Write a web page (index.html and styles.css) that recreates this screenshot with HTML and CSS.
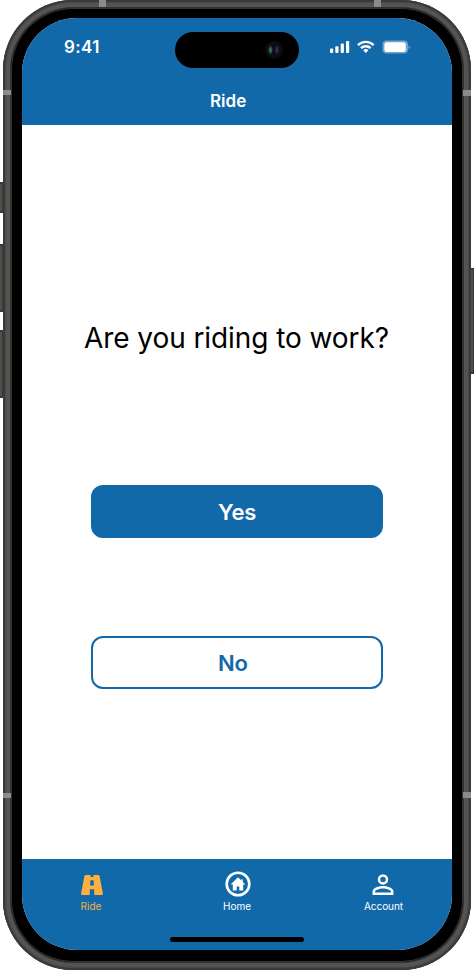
FILE: index.html
```html
<!DOCTYPE html>
<html lang="en">
<head>
<meta charset="utf-8">
<title>Ride</title>
<link rel="stylesheet" href="styles.css">
</head>
<body>
<div class="device">
  <span class="key key-action"></span>
  <span class="key key-up"></span>
  <span class="key key-down"></span>
  <span class="key key-power"></span>
  <div class="frame">
    <div class="bezel">
      <div class="screen">
        <header class="header">
          <div class="status">
            <span class="time">9:41</span>
            <div class="island"><span class="lens"></span></div>
            <svg class="indicators" width="80" height="14" viewBox="0 0 80 14" fill="#fff">
              <rect x="0" y="8.6" width="3.2" height="4.4" rx=".9"/>
              <rect x="5.3" y="6.3" width="3.2" height="6.7" rx=".9"/>
              <rect x="10.7" y="3.6" width="3.2" height="9.4" rx=".9"/>
              <rect x="16" y="1" width="3.2" height="12" rx=".9"/>
              <g fill="none" stroke="#fff" stroke-width="2.4">
                <path d="M28 5.100a11 11 0 0 1 15.600 0"/>
                <path d="M31 8.200a6.800 6.800 0 0 1 9.600 0"/>
              </g>
              <path d="M35.800 13l-2.600-2.700a3.700 3.700 0 0 1 5.200 0z"/>
              <rect x="52.500" y=".6" width="25.500" height="13" rx="4" opacity=".4"/>
              <rect x="54.400" y="2.300" width="21.400" height="9.600" rx="2.500"/>
              <path d="M78.600 5.200q2.800 2 0 4z" opacity=".4"/>
            </svg>
          </div>
          <h1 class="title">Ride</h1>
        </header>
        <main class="content">
          <p class="question">Are you riding to work?</p>
          <button class="choice choice-yes">Yes</button>
          <button class="choice choice-no">No</button>
        </main>
        <nav class="tabs">
          <a class="tab tab-ride">
            <svg class="icon" width="22" height="20" viewBox="0 0 22 20" fill="currentColor"><path fill-rule="evenodd" d="M4.700 0h4.900v2.100h2.800V0h4.900q1 0 1.300 1l3.300 17.400q.2 1.600-1.300 1.600h-7.400v-5.800H8.800V20H1.400Q-.1 20 .1 18.400L3.400 1Q3.700 0 4.700 0zM9.400 5.200l-.3 5.400h3.800l-.3-5.400z"/></svg>
            <span>Ride</span>
          </a>
          <a class="tab tab-home">
            <svg class="icon" width="26" height="26" viewBox="0 0 26 26" fill="currentColor"><circle cx="13" cy="13" r="11.300" fill="none" stroke="currentColor" stroke-width="2.600"/><path d="M13 6.300L5.600 13.500h2.200v5.900h3.900v-4h2.600v4h3.900v-5.900h2.200l-2.600-2.600V8.200h-1.500v1.200z"/></svg>
            <span>Home</span>
          </a>
          <a class="tab tab-account">
            <svg class="icon" width="32" height="32" viewBox="0 0 24 24" fill="currentColor"><path d="M12 4a4 4 0 0 1 4 4 4 4 0 0 1-4 4 4 4 0 0 1-4-4 4 4 0 0 1 4-4m0 1.900A2.100 2.100 0 0 0 9.900 8a2.100 2.100 0 0 0 2.100 2.100A2.100 2.100 0 0 0 14.100 8 2.100 2.100 0 0 0 12 5.900M12 13c2.670 0 8 1.330 8 4v3H4v-3c0-2.670 5.330-4 8-4m0 1.900c-2.970 0-6.100 1.460-6.100 2.100v1.100h12.200V17c0-.64-3.130-2.100-6.100-2.100z"/></svg>
            <span>Account</span>
          </a>
          <span class="home-bar"></span>
        </nav>
      </div>
    </div>
  </div>
  <span class="band band-h band-top-left"></span>
  <span class="band band-h band-top-right"></span>
  <span class="band band-v band-left-top"></span>
  <span class="band band-v band-left-bottom"></span>
  <span class="band band-v band-right-top"></span>
  <span class="band band-v band-right-bottom"></span>
</div>
</body>
</html>
```
FILE: styles.css
```css
* {
  box-sizing: border-box;
}

body {
  margin: 0;
  background: #fff;
  font-family: Inter, "Liberation Sans", sans-serif;
}

.device {
  position: relative;
  width: 474px;
  height: 970px;
  padding: 0 3px;
  overflow: hidden;
}

.frame {
  height: 970px;
  padding: 8px;
  border-radius: 70px;
  background: #555452;
  box-shadow: inset 0 0 0 2px #3b3a38, inset 0 0 1px 3px #4a4947;
}

.bezel {
  height: 954px;
  padding: 10px 11px;
  border-radius: 62px;
  background: #000;
  box-shadow: 0 0 0 1px #32312f, inset 0 0 0 1px #353433;
}

.screen {
  display: flex;
  flex-direction: column;
  height: 932px;
  width: 430px;
  border-radius: 55px;
  background: #fff;
  overflow: hidden;
}

.header {
  height: 107px;
  background: #1269aa;
  color: #fff;
}

.status {
  display: grid;
  grid-template-columns: 153px 124px 153px;
  height: 59px;
  padding-top: 14px;
}

.time {
  padding-left: 42px;
  font-size: 17px;
  font-weight: 600;
  line-height: 31px;
  letter-spacing: 0.4px;
}

.island {
  display: flex;
  align-items: center;
  justify-content: flex-end;
  height: 36px;
  padding-right: 16px;
  border-radius: 18px;
  background: #000;
}

.lens {
  width: 18px;
  height: 18px;
  border-radius: 50%;
  background:
    radial-gradient(ellipse 2.5px 5px at 5.5px 9px, #4a9080, transparent),
    radial-gradient(ellipse 2.5px 5px at 12px 9px, #303c80, transparent),
    #0d0d0f;
}

.indicators {
  margin: 8px 0 0 31px;
}

.title {
  margin: 14px 0 0 188px;
  font-size: 17px;
  font-weight: 600;
  line-height: 20px;
}

.content {
  flex: 1;
  display: flex;
  flex-direction: column;
  align-items: center;
}

.question {
  margin: 195px 0 0;
  padding-right: 1px;
  font-size: 28px;
  line-height: 36px;
  letter-spacing: -0.08px;
  color: #000;
  white-space: nowrap;
}

.choice {
  width: 292px;
  height: 53px;
  padding: 0 0 0 125px;
  border: 2px solid #1269aa;
  border-radius: 12px;
  font: 600 22px/30px Inter, sans-serif;
  letter-spacing: -0.1px;
  text-align: left;
}

.choice-yes {
  margin-top: 129px;
  background: #1269aa;
  color: #fff;
}

.choice-no {
  margin-top: 98px;
  background: #fff;
  color: #1269aa;
}

.tabs {
  position: relative;
  display: flex;
  justify-content: space-between;
  height: 91px;
  padding: 10px 39px 0 39px;
  background: #1269aa;
}

.tab {
  display: flex;
  flex-direction: column;
  align-items: center;
  width: 60px;
  height: 44px;
  color: #fff;
  font-size: 10px;
  line-height: 12px;
}

.tab span {
  margin-top: auto;
  height: 13px;
}

.tab-ride {
  color: #fbb040;
}

.tab-ride .icon {
  margin: 6px 0 0 1px;
}

.tab-home .icon {
  margin: 2px 0 0 1px;
}

.tab-account span {
  margin-left: 1px;
  letter-spacing: -0.05px;
}

.home-bar {
  position: absolute;
  left: 148px;
  bottom: 8px;
  width: 134px;
  height: 5px;
  border-radius: 3px;
  background: #000;
}

.key {
  position: absolute;
  left: 0;
  width: 3px;
  background: #504f4c;
  border: solid #393835;
  border-width: 2px 1px 2px 0;
}

.key-action {
  top: 182px;
  height: 31px;
}

.key-up {
  top: 244px;
  height: 68px;
}

.key-down {
  top: 330px;
  height: 68px;
}

.key-power {
  left: 471px;
  top: 268px;
  height: 106px;
}

.band {
  position: absolute;
  background: #8c8b89;
}

.band-h {
  top: 0;
  width: 7px;
  height: 7px;
}

.band-v {
  width: 8px;
  height: 5px;
}

.band-top-left {
  left: 99px;
}

.band-top-right {
  left: 374px;
}

.band-left-top {
  left: 3px;
  top: 90px;
}

.band-left-bottom {
  left: 3px;
  top: 793px;
}

.band-right-top {
  left: 463px;
  top: 90px;
  height: 6px;
}

.band-right-bottom {
  left: 463px;
  top: 792px;
  height: 6px;
}
```
